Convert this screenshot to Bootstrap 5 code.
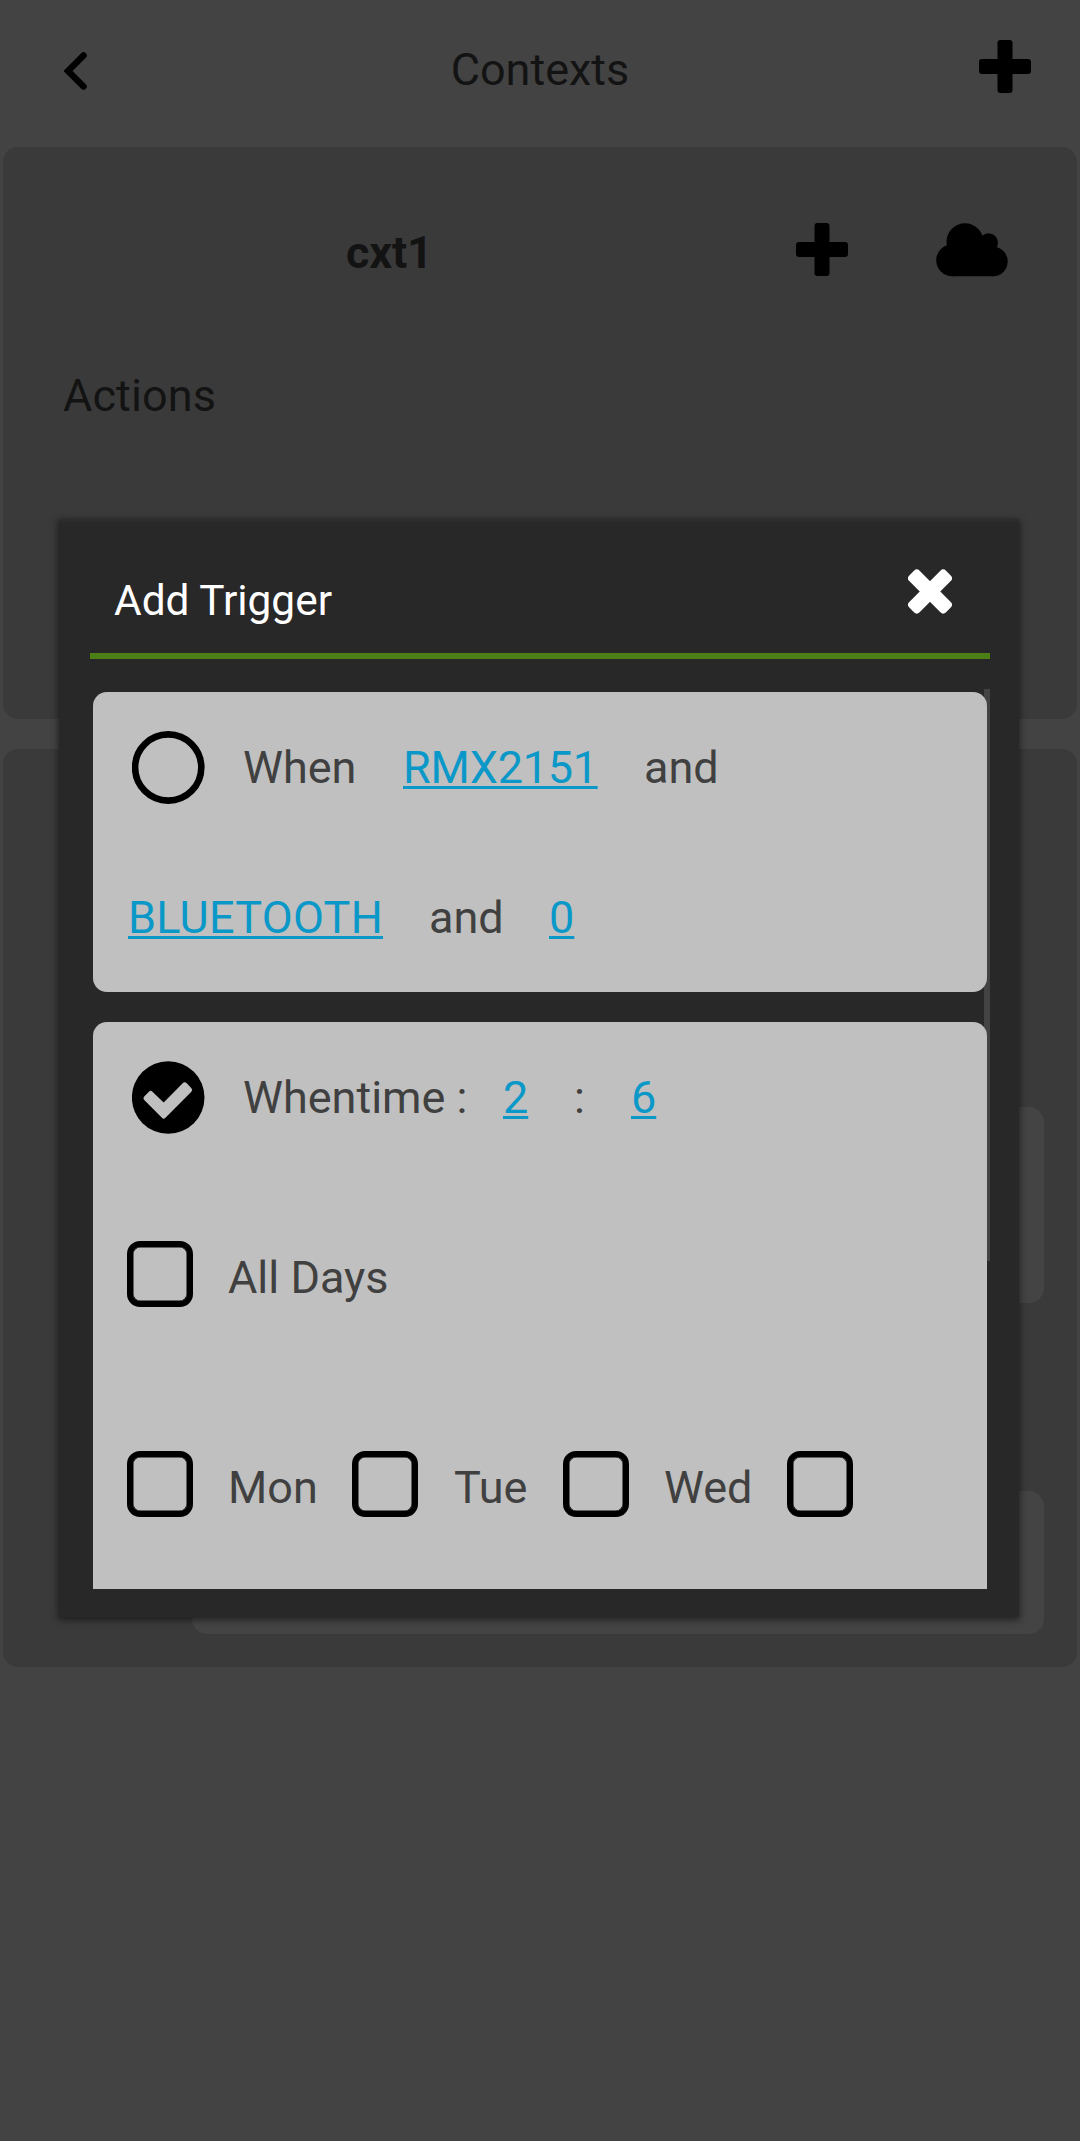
<!DOCTYPE html>
<html lang="en">
<head>
<meta charset="utf-8">
<meta name="viewport" content="width=device-width, initial-scale=1">
<title>Contexts</title>
<link href="https://cdn.jsdelivr.net/npm/bootstrap@5.3.0/dist/css/bootstrap.min.css" rel="stylesheet">
<style>
  html, body { height: 2141px; overflow: hidden; }
  body { background: #434343; color: #131313; font-family: Roboto, "Liberation Sans", sans-serif; font-size: 45px; line-height: 60px; }
  svg { display: block; flex: none; }
  .app-header { height: 147px; padding: 40px 49px 0 64px; }
  .app-header .back { margin-top: 12px; }
  .app-title { padding-left: 14px; }
  .ctx-card { background: #3a3a3a; border-radius: 15px; margin: 0 3px 30px; }
  .ctx-first { height: 572px; padding-top: 76px; }
  .ctx-head { padding: 0 69px 0 343px; }
  .ctx-name { letter-spacing: -.2px; }
  .ctx-cloud { margin-left: 88px; }
  .ctx-section { padding: 83px 0 0 60px; letter-spacing: .1px; }
  .ctx-second { height: 918px; padding: 358px 33px 0 189px; }
  .ctx-field { background: #444; border-radius: 15px; }
  .field-a { height: 196px; margin-bottom: 188px; }
  .field-b { height: 143px; }
  .overlay { padding: 519px 61px 0 59px; }
  .trigger-dialog { height: 1098px; background: #282828; border: 0; border-top: 3px solid #2c2c2c; border-radius: 2px; padding: 0 29px 0 31px; box-shadow: 0 2px 7px 1px rgba(0,0,0,.5); }
  .trigger-head { height: 137px; border-bottom: 6px solid #4b7f15; padding: 47px 38px 0 24px; color: #fff; font-size: 42.400px; }
  .trigger-head span { margin-top: 2px; }
  .trigger-list { height: 900px; margin-top: 30px; padding: 3px 3px 0; color: #404040; }
  .trigger-card { background: #c0c0c0; border-radius: 14px; padding-left: 35px; margin-bottom: 30px; }
  .trigger-card a { color: #0a98c8; text-decoration: underline; text-decoration-thickness: 3px; text-underline-offset: 3px; text-decoration-skip-ink: none; }
  .line-row { display: grid; height: 150px; align-items: center; white-space: nowrap; }
  .line-row > span { padding-top: 2px; }
  .row-when { grid-template-columns: 115px 160px 241px 100px; }
  .row-proto { grid-template-columns: 301px 120px 40px; }
  .row-time { grid-template-columns: 115px 260px 71px 57px 40px; }
  .row-all { grid-template-columns: 100px 300px; margin-top: 30px; }
  .row-days { grid-template-columns: 100px 125px 101px 110px 100px 124px 70px; margin-top: 60px; }
  .word-tight { letter-spacing: -.300px; }
  .word-wide { letter-spacing: .250px; }
  .radio-dot { margin: 1px 0 0 4px; }
  .box { width: 66px; height: 66px; border: 6px solid #000; border-radius: 13px; margin: 0 0 6px -1px; box-shadow: inset 0 0 0 .5px #000; }
  .thumb { width: 6px; height: 572px; background: rgba(187,187,187,.19); }
</style>
</head>
<body>
<header class="app-header d-flex justify-content-between align-items-start">
  <svg class="back" width="23" height="38" viewBox="0 0 23 38"><path d="M19.5 3.5 4 19l15.500 15.500" fill="none" stroke="#000" stroke-width="6.500" stroke-linecap="round" stroke-linejoin="miter"/></svg>
  <div class="app-title flex-grow-1 text-center">Contexts</div>
  <svg width="52" height="53" viewBox="0 0 52 53"><rect y="19" width="52" height="15" rx="3"/><rect x="18.500" width="15" height="53" rx="3"/></svg>
</header>

<main>
  <section class="ctx-card ctx-first">
    <div class="ctx-head d-flex align-items-start">
      <div class="ctx-name fw-bold me-auto">cxt1</div>
      <svg width="52" height="53" viewBox="0 0 52 53"><rect y="19" width="52" height="15" rx="3"/><rect x="18.500" width="15" height="53" rx="3"/></svg>
      <svg class="ctx-cloud" width="72" height="54" viewBox="0 0 72 54"><circle cx="29" cy="18.800" r="18.500"/><circle cx="52.500" cy="19.700" r="9.500"/><circle cx="16.200" cy="37.200" r="16"/><circle cx="57" cy="38.500" r="14.700"/><path d="M16 20H55V30L57 53.200H16Z"/></svg>
    </div>
    <div class="ctx-section">Actions</div>
  </section>
  <section class="ctx-card ctx-second">
    <div class="ctx-field field-a"></div>
    <div class="ctx-field field-b"></div>
  </section>
</main>

<div class="overlay position-absolute top-0 start-0 w-100">
  <div class="trigger-dialog modal-content" role="dialog">
    <div class="trigger-head d-flex justify-content-between align-items-start">
      <span>Add Trigger</span>
      <svg width="44" height="45" viewBox="0 0 44 45"><g fill="#fff" transform="rotate(45 22 22.500)"><rect x="-4" y="15.200" width="52" height="14.600" rx="4"/><rect x="14.700" y="-3.500" width="14.600" height="52" rx="4"/></g></svg>
    </div>
    <div class="trigger-list position-relative overflow-hidden">
      <div class="trigger-card">
        <div class="line-row row-when">
          <svg class="radio-dot" width="73" height="73" viewBox="0 0 73 73"><circle cx="36.200" cy="36.500" r="33.100" fill="none" stroke="#000" stroke-width="6.600"/></svg>
          <span>When</span><span><a class="word-tight" href="#">RMX2151</a></span><span>and</span>
        </div>
        <div class="line-row row-proto">
          <span><a class="word-wide" href="#">BLUETOOTH</a></span><span>and</span><span><a href="#">0</a></span>
        </div>
      </div>
      <div class="trigger-card">
        <div class="line-row row-time">
          <svg class="radio-dot" width="73" height="73" viewBox="0 0 73 73"><circle cx="36.200" cy="36.500" r="36.300"/><path d="M14 37.300 18.700 32.500 31.700 45 52.700 23.800 57.600 29 31.700 55Z" fill="#c0c0c0" stroke="#c0c0c0" stroke-width="5" stroke-linejoin="round"/></svg>
          <span>Whentime :</span><span><a href="#">2</a></span><span>:</span><span><a href="#">6</a></span>
        </div>
        <div class="line-row row-all"><i class="box"></i><span>All Days</span></div>
        <div class="line-row row-days">
          <i class="box"></i><span>Mon</span><i class="box"></i><span>Tue</span><i class="box"></i><span>Wed</span><i class="box"></i>
        </div>
        <div class="line-row"></div>
      </div>
      <div class="thumb position-absolute top-0 end-0"></div>
    </div>
  </div>
</div>
<script src="https://cdn.jsdelivr.net/npm/bootstrap@5.3.0/dist/js/bootstrap.bundle.min.js"></script>
</body>
</html>
